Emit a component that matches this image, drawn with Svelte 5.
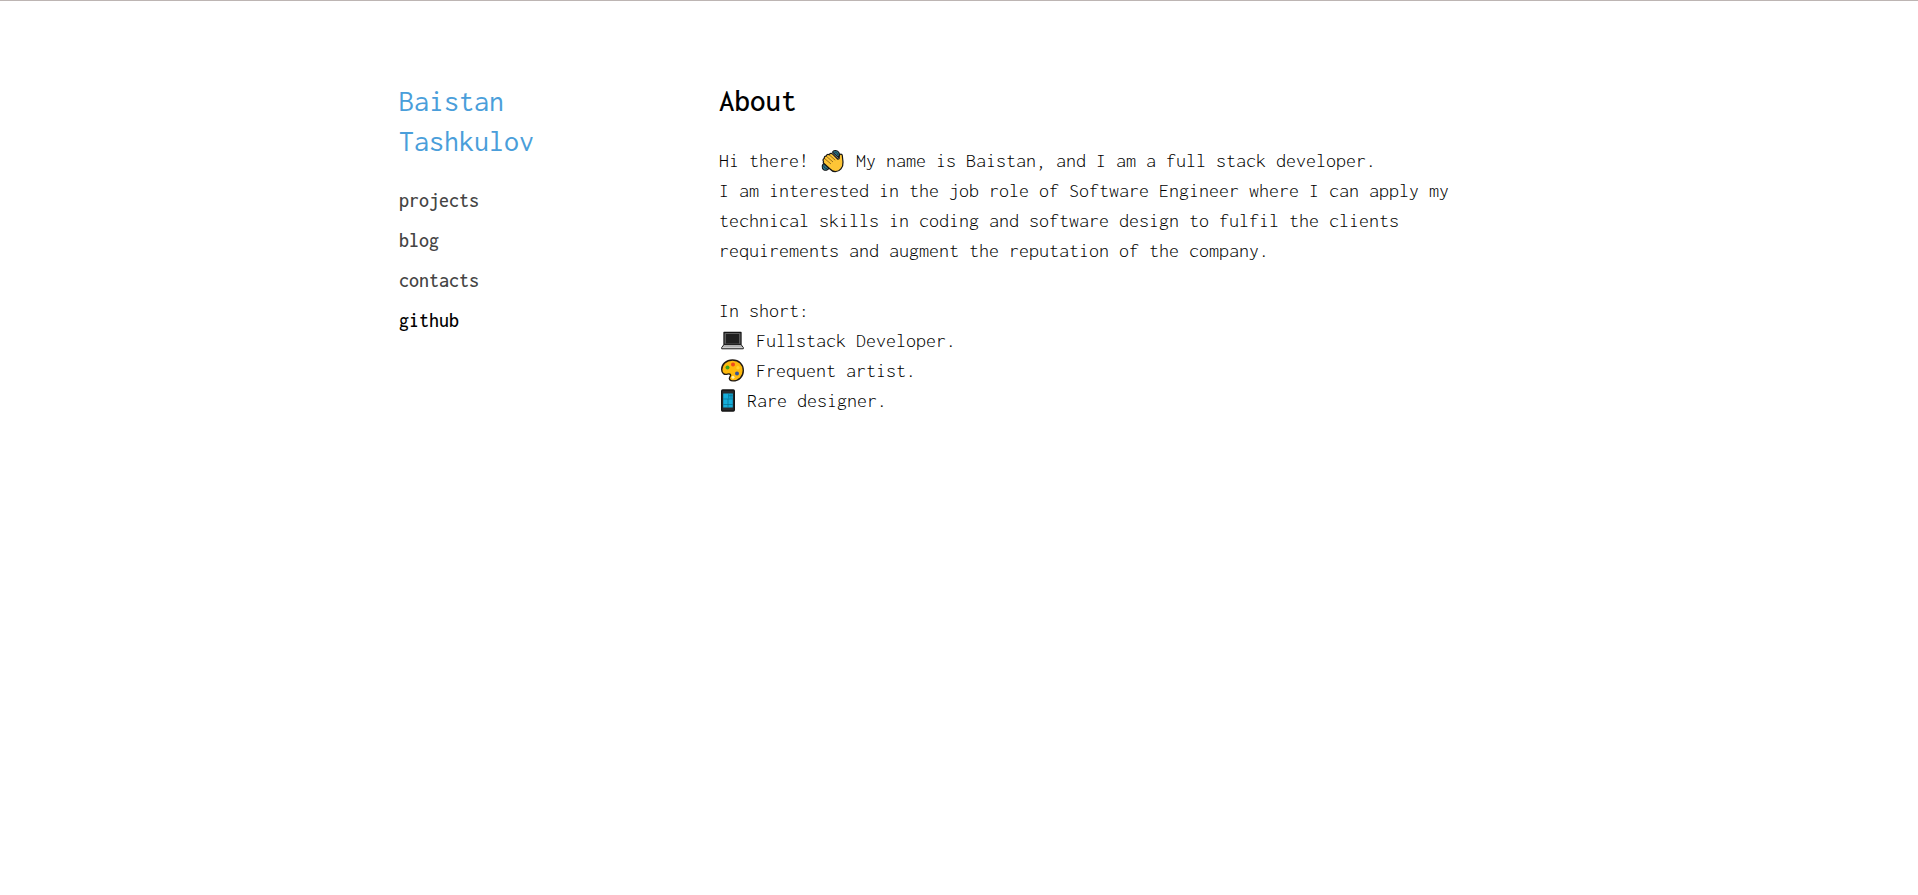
<script>
  const links = ['projects', 'blog', 'contacts', 'github'];
</script>

<div class="page">
  <aside>
    <a class="name" href="/">Baistan Tashkulov</a>
    <nav>
      {#each links as link}
        <a class:strong={link === 'github'} href="/{link}">{link}</a>
      {/each}
    </nav>
  </aside>

  <main>
    <h1>About</h1>
    <p>
      Hi there!
      <svg class="icon" viewBox="0 0 27 24" role="img" aria-label="waving hand">
        <path d="M13.500 3.200C14.500 .8 18.500 1 20 3.800C20.800 5.500 20.300 7.500 19.300 8.500Z" fill="#2d7b91" stroke="#151515" stroke-width="1.100" />
        <path d="M15.500 3.200C17.300 3 18.300 4 18.800 6" fill="none" stroke="#111" stroke-width=".6" />
        <path d="M6 14.300C2.800 14.600 2.200 19.500 5 21C7 21.800 9.200 21 9.800 19Z" fill="#2d7b91" stroke="#151515" stroke-width="1.100" />
        <path d="M4.800 16.500C4.800 18.500 6 19.500 8 19.500" fill="none" stroke="#111" stroke-width=".6" />
        <path d="M4.500 12.300C3.500 11 4.200 9.500 5.500 9.500C4.800 8 6 6.800 7.300 7.200C7.500 5.500 9 5 10.200 5.800C11 4.200 12.500 4 13.700 5.200L18.900 10.200L20.100 9.800L20.400 6.500C20.700 4.600 23.100 4.600 23.300 6.500L24 13C24.400 18.500 20.700 22.600 16.300 22.600C14 22.600 12.300 21.500 11 20L5 14.500C4.200 13.700 4 13 4.500 12.300Z" fill="#fdc536" stroke="#151515" stroke-width="1.200" stroke-linejoin="round" />
        <path d="M5.500 9.500l6.500 5.500M7.300 7.200l6.700 5.800M10.200 5.800l6 5.400" fill="none" stroke="#8b6519" stroke-width=".9" />
      </svg>
      My name is Baistan, and I am a full stack developer.<br />
      I am interested in the job role of Software Engineer where I can apply my technical skills in
      coding and software design to fulfil the clients requirements and augment the reputation of the
      company.
    </p>
    <p>
      In short:<br />
      <svg class="icon" viewBox="0 0 27 24" role="img" aria-label="laptop">
        <path d="M5 3.500h17v12H5z" fill="#777" stroke="#161616" stroke-width="1.300" stroke-linejoin="round" />
        <path d="M6.700 5h13.600v9.600H6.700z" fill="#202020" />
        <path d="M5 15.500h17l2.300 3v1.300H2.700v-1.300z" fill="#b0b0b0" stroke="#222" stroke-width="1" />
        <path d="M3.500 18.500h20" stroke="#ccc" stroke-width="1" />
      </svg>
      Fullstack Developer.<br />
      <svg class="icon" viewBox="0 0 27 24" role="img" aria-label="artist palette">
        <path d="M13.500 1C7 1 2.700 5.500 2.700 10.500C2.700 14.500 5.500 16 8.500 15.100C11.500 14.300 12.500 16 10.800 18C9.600 20 11 21.900 14 21.900C20 21.900 24.300 17.500 24.300 11.500C24.300 5.500 20 1 13.500 1Z" fill="#fdb90d" stroke="#211a13" stroke-width="1.400" />
        <circle cx="8.500" cy="8.500" r="2" fill="#40a51d" />
        <circle cx="14" cy="5.500" r="2" fill="#ed4b1c" />
        <circle cx="19" cy="8.700" r="1.700" fill="#ffd22a" />
        <circle cx="18" cy="14.500" r="2" fill="#365499" />
        <circle cx="14" cy="18.200" r="1.500" fill="#fff0a5" />
      </svg>
      Frequent artist.<br />
      <svg class="icon phone" viewBox="0 0 18 24" role="img" aria-label="mobile phone">
        <rect x="2.700" y="1" width="12.600" height="21" rx="1" fill="#292c2f" stroke="#141414" stroke-width="1.400" />
        <path d="M4.200 4.500h9.600v14H4.200z" fill="#16aedb" />
        <path d="M9.700 4.500v5M12 4.500v5M9.700 6.700h4.100M4.200 10h9.600M9 10v8.500M4.200 15.500h9.600" fill="none" stroke="#07708f" stroke-width=".7" />
      </svg>
      Rare designer.
    </p>
  </main>
</div>

<style>
  :global(body) {
    margin: 0;
    background: #fff;
  }

  .page {
    display: grid;
    grid-template-columns: minmax(0, 2fr) minmax(0, 5fr);
    box-sizing: border-box;
    padding: 80px calc((100% - 1120px) / 2);
    border-top: 1px solid #bdb5b3;
    font-family: Inconsolata, 'Liberation Mono', monospace;
    font-size: 20px;
    font-weight: 300;
    line-height: 30px;
    color: #000;
  }

  aside {
    padding-right: 80px;
  }

  a {
    display: block;
    font-weight: 500;
    line-height: 40px;
    color: #444;
    text-decoration: none;
  }

  .name {
    margin-bottom: 20px;
    font-size: 30px;
    font-weight: 400;
    color: #4a9eda;
  }

  .strong {
    color: #000;
  }

  h1 {
    margin: 0 0 25px;
    font-size: 31px;
    font-weight: 500;
    line-height: 40px;
    color: #000;
  }

  p {
    margin: 0 0 30px;
  }

  .icon {
    width: 27px;
    height: 24px;
    vertical-align: -6px;
  }

  .phone {
    width: 18px;
  }
</style>
